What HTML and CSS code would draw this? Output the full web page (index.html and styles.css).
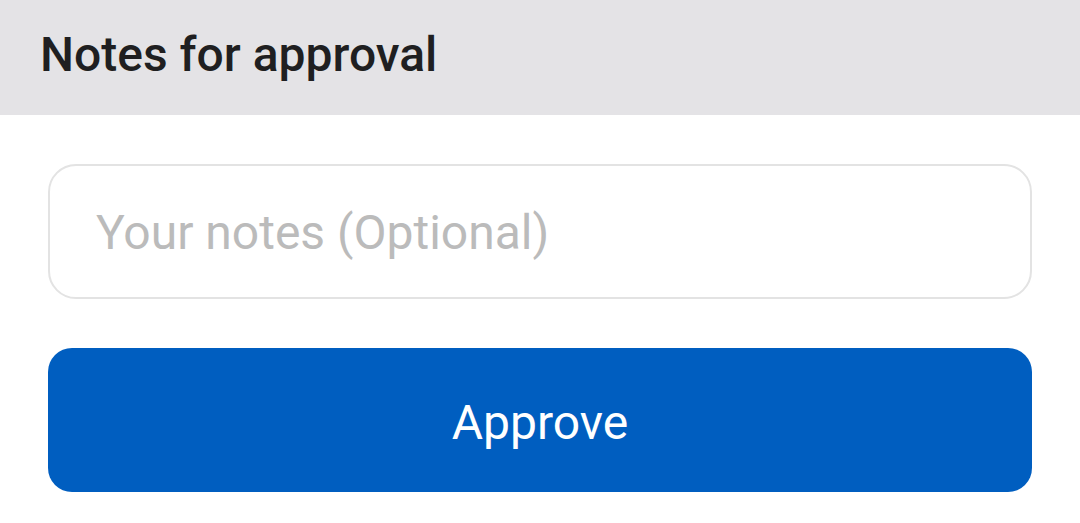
FILE: index.html
```html
<!DOCTYPE html>
<html lang="en">
<head>
<meta charset="utf-8">
<title>Notes for approval</title>
<link rel="stylesheet" href="styles.css">
</head>
<body>
<div class="sheet">
  <header class="sheet-header">
    <h1 class="sheet-title">Notes for approval</h1>
  </header>
  <main class="sheet-body">
    <div class="notes-field">
      <span class="notes-placeholder">Your notes (Optional)</span>
    </div>
    <button class="approve-btn" type="button">Approve</button>
  </main>
</div>
</body>
</html>
```
FILE: styles.css
```css
* { box-sizing: border-box; }
html, body { margin: 0; padding: 0; background: #ffffff; }
body { font-family: Roboto, "Noto Sans", sans-serif; width: 1080px; height: 523px; overflow: hidden; }
.sheet { display: flex; flex-direction: column; }
.sheet-header {
  background: #e4e3e6;
  height: 115px;
  display: flex;
  align-items: center;
  padding-left: 40px;
}
.sheet-title {
  margin: 0;
  font-size: 48px;
  font-weight: 500;
  color: #1f1f21;
  line-height: 1;
  padding-bottom: 6px;
}
.sheet-body {
  display: flex;
  flex-direction: column;
  padding: 49px 48px 0 48px;
  gap: 49px;
}
.notes-field {
  height: 135px;
  border: 2px solid #e3e3e3;
  border-radius: 28px;
  display: flex;
  align-items: center;
  padding-left: 46px;
  padding-top: 3px;
}
.notes-placeholder {
  font-size: 48px;
  color: #bbbbbb;
  line-height: 1;
}
.approve-btn {
  height: 144px;
  border: none;
  border-radius: 24px;
  background: #005ec0;
  color: #ffffff;
  font-family: Roboto, "Noto Sans", sans-serif;
  font-size: 48px;
  line-height: 1;
  padding: 5px 0 0 0;
}
```
